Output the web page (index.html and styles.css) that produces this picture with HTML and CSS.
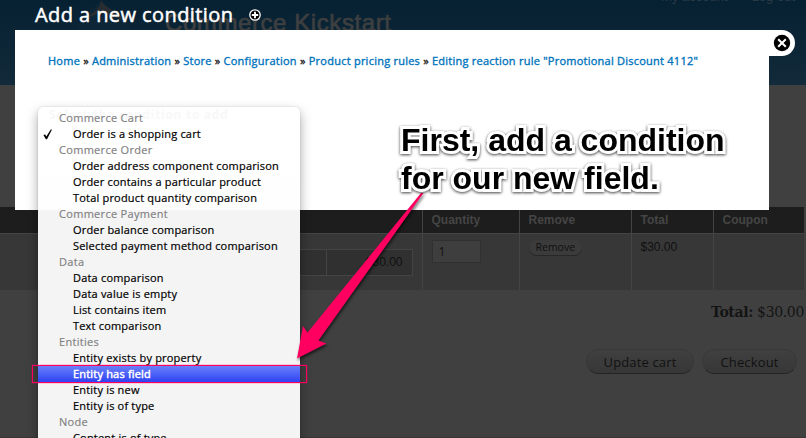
FILE: index.html
```
<!DOCTYPE html>
<html lang="en">
<head>
<meta charset="utf-8">
<title>Add a new condition</title>
<link rel="stylesheet" href="styles.css">
</head>
<body>
<div class="page">
  <header class="site-header">
    <svg class="drop" width="60" height="75" viewBox="0 0 60 75"><path d="M27 0C23 9 2 14 1 39c0 20 14 32 29 32s29-12 29-32C58 15 32 9 27 0z" fill="#0d2637"/><path d="M27 0c0 9-9 13-15 18 10-4 14-5 20-4 10 2 14 6 22 9C46 12 31 9 27 0z" fill="#282d32"/></svg>
    <span class="site-name">Commerce Kickstart</span>
    <nav class="user-links"><span>My account</span><span>Log out</span></nav>
  </header>
  <main class="cart">
    <table class="cart-table">
      <colgroup><col class="c-product"><col class="c-qty"><col class="c-remove"><col class="c-total"><col class="c-coupon"></colgroup>
      <thead><tr><th></th><th>Quantity</th><th>Remove</th><th>Total</th><th>Coupon</th></tr></thead>
      <tbody><tr>
        <td><div class="price-row"><span class="price-label"></span><span class="price">$30.00</span></div></td>
        <td><div class="qty">1</div></td>
        <td><span class="remove">Remove</span></td>
        <td>$30.00</td>
        <td></td>
      </tr></tbody>
    </table>
    <div class="order-total"><b>Total:</b> $30.00</div>
    <div class="actions"><span class="button update">Update cart</span><span class="button checkout">Checkout</span></div>
  </main>
</div>

<div class="overlay-title"><h1>Add a new condition</h1>
  <svg width="12" height="12" viewBox="0 0 12 12"><circle cx="6" cy="6" r="5.2" fill="#000" stroke="#fff" stroke-width="1.3"/><path d="M6 2.8v6.4M2.8 6h6.4" stroke="#fff" stroke-width="1.9"/></svg>
</div>
<section class="dialog">
  <nav class="breadcrumb"><a>Home</a> » <a>Administration</a> » <a>Store</a> » <a>Configuration</a> » <a>Product pricing rules</a> » <a>Editing reaction rule "Promotional Discount 4112"</a></nav>
</section>
<div class="close"><svg width="18" height="18" viewBox="0 0 18 18"><circle cx="9" cy="9" r="8.2" fill="#000"/><path d="M5.2 5.2l7.6 7.6M12.8 5.2l-7.6 7.6" stroke="#fff" stroke-width="2"/></svg></div>

<div class="menu">
  <div class="ghost">Select the condition to add</div>
  <div class="group">Commerce Cart</div>
  <div class="item checked"><svg class="check" width="10" height="11" viewBox="0 0 10 11"><path d="M.5 6.2L2 5.2l1.3 2.2L7.8.4 9 .6 4 10.2H2.9z" fill="#000"/></svg>Order is a shopping cart</div>
  <div class="group">Commerce Order</div>
  <div class="item">Order address component comparison</div>
  <div class="item">Order contains a particular product</div>
  <div class="item">Total product quantity comparison</div>
  <div class="group">Commerce Payment</div>
  <div class="item">Order balance comparison</div>
  <div class="item">Selected payment method comparison</div>
  <div class="group">Data</div>
  <div class="item">Data comparison</div>
  <div class="item">Data value is empty</div>
  <div class="item">List contains item</div>
  <div class="item">Text comparison</div>
  <div class="group">Entities</div>
  <div class="item">Entity exists by property</div>
  <div class="item selected">Entity has field</div>
  <div class="item">Entity is new</div>
  <div class="item">Entity is of type</div>
  <div class="group">Node</div>
  <div class="item">Content is of type</div>
</div>

<svg class="arrow" width="806" height="438" viewBox="0 0 806 438"><path d="M421 193L307.5 332.5 303 326 297 358.5 326.5 343.5 318.5 340.5 423.500 193z" fill="#ff0061"/></svg>
<div class="highlight"></div>
<div class="callout"><span class="line first">First, add a condition</span><span class="line">for our new field.</span></div>
</body>
</html>
```
FILE: styles.css
```
* { box-sizing: border-box; }
body {
  margin: 0;
  width: 806px;
  height: 438px;
  overflow: hidden;
  position: relative;
  background: #404040;
  font-family: "Open Sans", "Noto Sans", sans-serif;
}
.page { height: 438px; overflow: hidden; border-bottom: 1px solid #373536; }
.site-header {
  height: 85px;
  display: flex;
  align-items: flex-start;
  background: linear-gradient(#062132, #122a3a);
  color: #3d3f40;
}
.drop { margin-left: 74px; flex: none; }
.site-name {
  margin: 9px 0 0 31px;
  font: 24px/28px "Liberation Sans", sans-serif;
  letter-spacing: 0.58px;
  -webkit-text-stroke: 0.7px #3d3f40;
  white-space: nowrap;
}
.user-links {
  margin: -11px 11px 0 auto;
  display: flex;
  gap: 24px;
  font: 13px/15px "Liberation Sans", sans-serif;
  color: #2b3b46;
}
.cart { padding-top: 122px; width: 804px; }
.cart-table {
  width: 804px;
  table-layout: fixed;
  border-collapse: collapse;
  font: 12px/14px "Liberation Sans", sans-serif;
  color: #101010;
}
.c-product { width: 422px; }
.c-qty { width: 97px; }
.c-remove { width: 112px; }
.c-total { width: 82px; }
.c-coupon { width: 91px; }
th {
  height: 26px;
  padding: 0 0 0 9px;
  background: #1d1d1d;
  color: #454545;
  text-align: left;
  vertical-align: middle;
}
th, td { border-right: 1px solid #444; }
th:last-child, td:last-child { border-right: 0; }
td {
  height: 57px;
  padding: 6px 0 0 9px;
  vertical-align: top;
  background: #373737;
  border-top: 1px solid #444;
}
td:first-child { padding: 15px 9px 0 150px; }
.price-row { display: flex; height: 27px; border: 1px solid #444; background: #303030; }
.price-label { width: 176px; border-right: 1px solid #444; }
.price { flex: 1; text-align: right; padding: 5px 9px 0 0; }
.qty { width: 49px; height: 23px; border: 1px solid #303030; background: #3e3e3e; padding: 4px 6px; font-family: "Open Sans", sans-serif; }
.remove {
  display: inline-block;
  height: 15px;
  padding: 0 7px;
  border-radius: 8px;
  background: #3b3b3b;
  box-shadow: 0 1px 0 #272727;
  font: 10.500px/15px "Open Sans", sans-serif;
}
.order-total {
  margin-top: 13px;
  text-align: right;
  font: 14px/18px "DejaVu Serif", serif;
  letter-spacing: -0.35px;
  color: #141414;
  white-space: nowrap;
}
.actions { display: flex; justify-content: flex-end; gap: 8px; margin: 28px 7px 0 0; }
.button {
  height: 25px;
  border-radius: 13px;
  border: 1px solid #393939;
  border-bottom-color: #242424;
  background: linear-gradient(#404040, #373737);
  color: #111;
  text-align: center;
  font-size: 13px;
  line-height: 24px;
  letter-spacing: 0.15px;
}
.update { width: 108px; }
.checkout { width: 95px; }

.overlay-title { position: absolute; left: 35px; top: 2px; display: flex; align-items: center; gap: 16px; height: 26px; }
.overlay-title h1 { margin: 0; width: 198px; font-size: 20px; font-weight: 400; line-height: 26px; color: #fff; letter-spacing: 0.42px; white-space: nowrap; -webkit-text-stroke: 0.5px #fff; }
.dialog { position: absolute; left: 15px; top: 30px; width: 754px; height: 180px; background: #fff; padding: 23px 0 0 33px; }
.breadcrumb { font-size: 11px; line-height: 16px; letter-spacing: 0.24px; color: #222; white-space: nowrap; -webkit-text-stroke: 0.35px; }
.breadcrumb a { color: #0074bd; }
.close { position: absolute; left: 769px; top: 30px; width: 26px; height: 26px; border-radius: 0 13px 13px 0; background: #fff; padding: 4px; }
.close svg { display: block; }
.menu {
  position: absolute;
  left: 38px;
  top: 107px;
  width: 262px;
  height: 340px;
  padding-top: 3px;
  border-radius: 5px 5px 0 0;
  background: linear-gradient(#fff 0, #fefefe 102px, #f4f4f4 104px);
  box-shadow: 0 0 1px rgba(0,0,0,.4), 0 5px 12px rgba(0,0,0,.35);
  color: #000;
  font-size: 11px;
  line-height: 16px;
  letter-spacing: 0.19px;
  white-space: nowrap;
}
.ghost { position: absolute; left: 11px; top: 0; font-size: 12px; font-weight: 700; color: #f8f8f8; letter-spacing: 0.7px; }
.group { position: relative; height: 16px; padding-left: 21px; color: #808080; letter-spacing: 0.3px; -webkit-text-stroke: 0.15px; }
.item { position: relative; height: 16px; padding-left: 35px; -webkit-text-stroke: 0.2px; }
.check { position: absolute; left: 5px; top: 3px; }
.selected { background: linear-gradient(#6a80fa, #2f43f3); color: #fff; -webkit-text-stroke: 0.45px #fff; }
.highlight { position: absolute; left: 32px; top: 365px; width: 275px; height: 18px; border: 1px solid #ff0061; box-shadow: 0 0 1px #ff0061; }
.arrow { position: absolute; left: 0; top: 0; filter: drop-shadow(1px 2px 1.500px rgba(0,0,0,.6)); }
.callout {
  position: absolute;
  left: 401px;
  top: 121px;
  font: 700 32px/38px "Liberation Sans", sans-serif;
  color: #000;
  white-space: nowrap;
  -webkit-text-stroke: 6px #fff;
  paint-order: stroke fill;
  filter: drop-shadow(0 1px 1.500px rgba(0,0,0,.75));
}
.line { display: block; }
```
